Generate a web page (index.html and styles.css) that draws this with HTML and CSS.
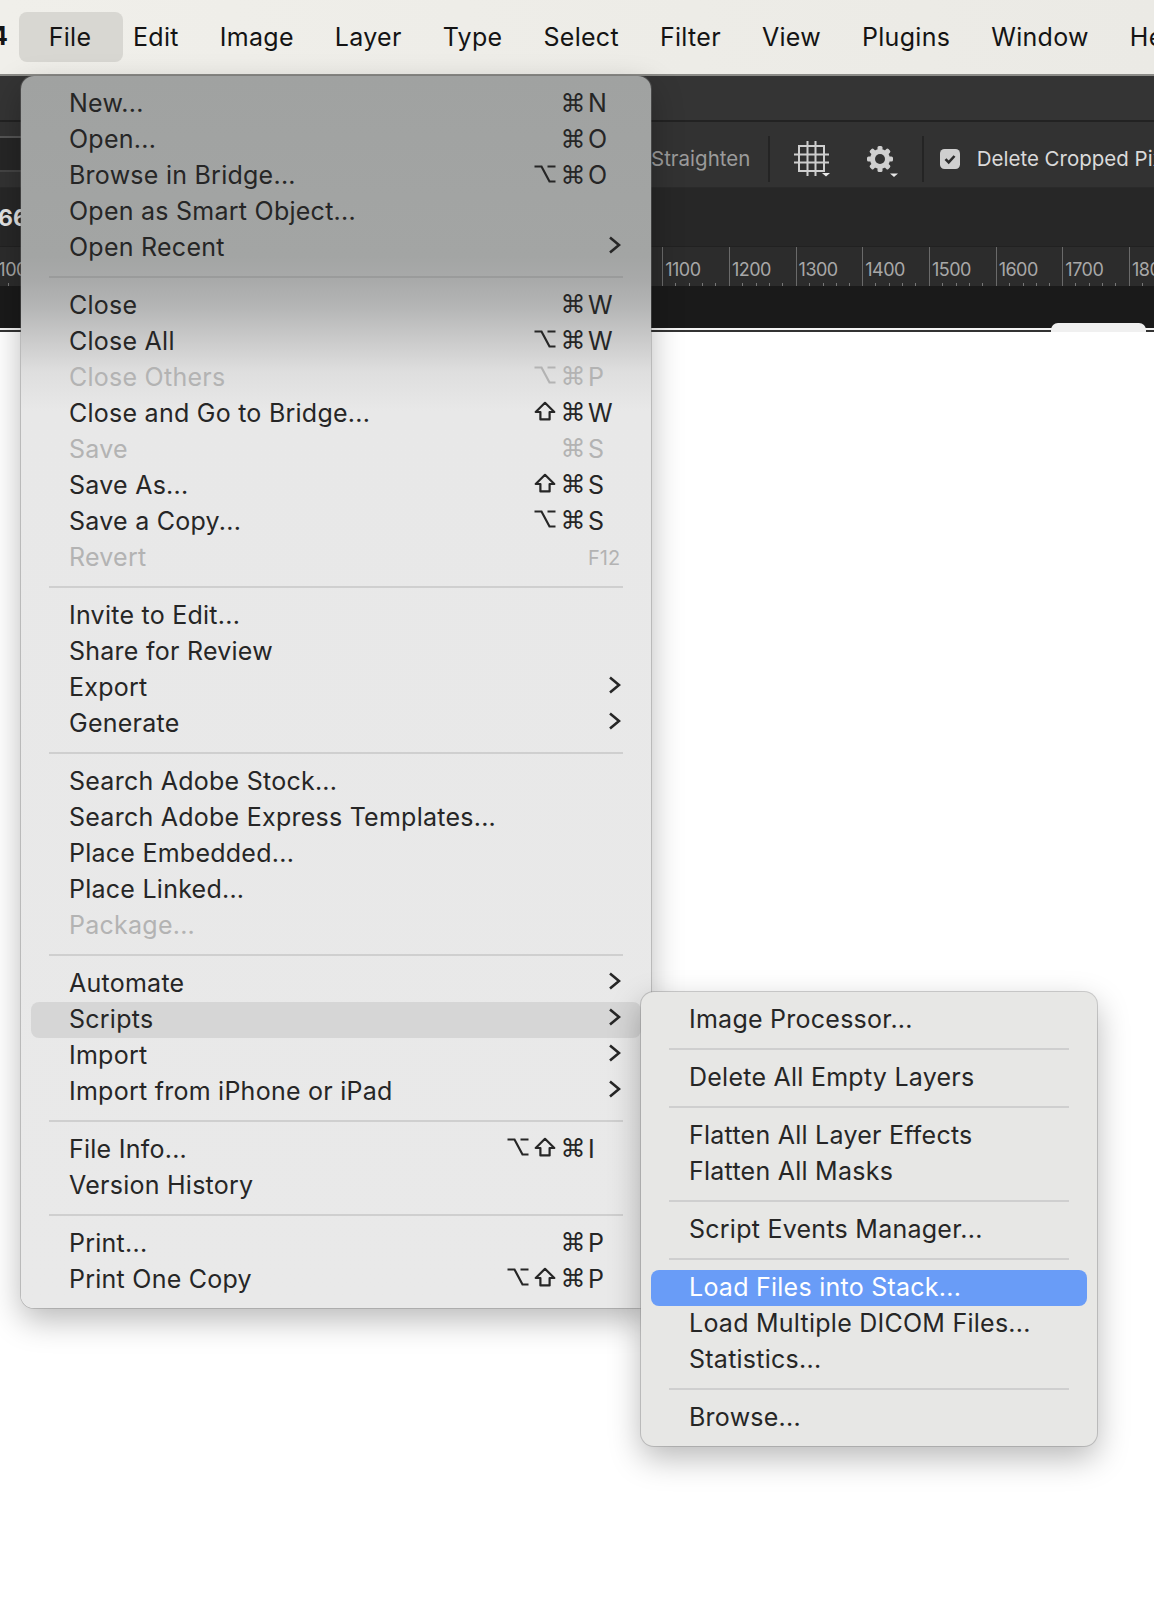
FILE: index.html
```html
<!DOCTYPE html>
<html lang="en">
<head>
<meta charset="utf-8">
<title>Photoshop File menu</title>
<link rel="stylesheet" href="styles.css">
</head>
<body>
<svg class="defs" width="0" height="0" aria-hidden="true">
  <symbol id="opt" viewBox="0 0 22 20"><path d="M0.5 2.5H7.5L15.5 17.5H21.5M13.5 2.5H21.5" fill="none" stroke="currentColor" stroke-width="2.2"/></symbol>
  <symbol id="shift" viewBox="0 0 22 20"><path d="M11 1.8L20.3 11H15.6V18.4H6.4V11H1.7Z" fill="none" stroke="currentColor" stroke-width="2.2" stroke-linejoin="round"/></symbol>
  <symbol id="chev" viewBox="0 0 13 18"><path d="M2 1.5L11 9L2 16.5" fill="none" stroke="#262626" stroke-width="2.6"/></symbol>
</svg>
<header class="menubar">
  <span class="apple-cut">4</span>
  <span class="mi active">File</span>
  <nav class="mi-list">
    <span>Edit</span><span>Image</span><span>Layer</span><span>Type</span><span>Select</span><span>Filter</span><span>View</span><span>Plugins</span><span>Window</span><span>Help</span>
  </nav>
</header>

<section class="app">
  <div class="band-top"></div>
  <div class="options">
    <div class="optbox"></div>
    <span class="straighten">Straighten</span>
    <i class="vdiv first"></i>
    <svg class="ic-grid" viewBox="0 0 38 38" width="38" height="38" aria-hidden="true">
      <g fill="none" stroke="#cfcfcf" stroke-width="2">
        <rect x="6" y="6" width="25" height="25"/>
        <path d="M14.5 1v35M22.5 1v35M1 14.5h35M1 22.5h35"/>
      </g>
      <path d="M29 33h8l-4 3.5z" fill="#e8e8e8"/>
    </svg>
    <svg class="ic-gear" viewBox="0 0 36 36" width="36" height="36" aria-hidden="true">
      <g fill="#cfcfcf" transform="translate(0 3)">
        <circle cx="15" cy="15" r="10"/>
        <rect x="12.5" y="2" width="5" height="26" rx="1.5"/>
        <rect x="12.5" y="2" width="5" height="26" rx="1.5" transform="rotate(45 15 15)"/>
        <rect x="12.5" y="2" width="5" height="26" rx="1.5" transform="rotate(90 15 15)"/>
        <rect x="12.5" y="2" width="5" height="26" rx="1.5" transform="rotate(135 15 15)"/>
        <circle cx="15" cy="15" r="5" fill="#323232"/>
      </g>
      <path d="M25 32.5h8l-4 3.5z" fill="#e8e8e8"/>
    </svg>
    <i class="vdiv second"></i>
    <svg class="ic-check" viewBox="0 0 20 20" width="20" height="20" aria-hidden="true">
      <rect width="20" height="20" rx="4.5" fill="#cfcfcf"/>
      <path d="M5.5 10.2l3.2 3.2 5.8-6.4" fill="none" stroke="#2b2b2b" stroke-width="2.6"/>
    </svg>
    <span class="delete">Delete Cropped Pixels</span>
  </div>
  <div class="docbar"><span class="zoomval">66</span></div>
  <div class="ruler">
    <span>100</span><span></span><span></span><span></span><span></span><span></span><span></span><span></span><span></span><span></span><span>1100</span><span>1200</span><span>1300</span><span>1400</span><span>1500</span><span>1600</span><span>1700</span><span>1800</span>
  </div>
  <div class="canvas-top"></div>
  <div class="edge"><b class="tab"></b></div>
</section>

<section class="menu main">
  <div class="row"><span class="lb">New...</span><span class="mods"><u>⌘</u></span><span class="key">N</span></div>
  <div class="row"><span class="lb">Open...</span><span class="mods"><u>⌘</u></span><span class="key">O</span></div>
  <div class="row"><span class="lb">Browse in Bridge...</span><span class="mods"><u><svg class="sym"><use href="#opt"/></svg></u><u>⌘</u></span><span class="key">O</span></div>
  <div class="row"><span class="lb">Open as Smart Object...</span></div>
  <div class="row"><span class="lb">Open Recent</span><span class="key"><svg class="chev"><use href="#chev"/></svg></span></div>
  <div class="sep dim"></div>
  <div class="row"><span class="lb">Close</span><span class="mods"><u>⌘</u></span><span class="key">W</span></div>
  <div class="row"><span class="lb">Close All</span><span class="mods"><u><svg class="sym"><use href="#opt"/></svg></u><u>⌘</u></span><span class="key">W</span></div>
  <div class="row off"><span class="lb">Close Others</span><span class="mods"><u><svg class="sym"><use href="#opt"/></svg></u><u>⌘</u></span><span class="key">P</span></div>
  <div class="row"><span class="lb">Close and Go to Bridge...</span><span class="mods"><u><svg class="sym"><use href="#shift"/></svg></u><u>⌘</u></span><span class="key">W</span></div>
  <div class="row off"><span class="lb">Save</span><span class="mods"><u>⌘</u></span><span class="key">S</span></div>
  <div class="row"><span class="lb">Save As...</span><span class="mods"><u><svg class="sym"><use href="#shift"/></svg></u><u>⌘</u></span><span class="key">S</span></div>
  <div class="row"><span class="lb">Save a Copy...</span><span class="mods"><u><svg class="sym"><use href="#opt"/></svg></u><u>⌘</u></span><span class="key">S</span></div>
  <div class="row off"><span class="lb">Revert</span><span class="key small">F12</span></div>
  <div class="sep"></div>
  <div class="row"><span class="lb">Invite to Edit...</span></div>
  <div class="row"><span class="lb">Share for Review</span></div>
  <div class="row"><span class="lb">Export</span><span class="key"><svg class="chev"><use href="#chev"/></svg></span></div>
  <div class="row"><span class="lb">Generate</span><span class="key"><svg class="chev"><use href="#chev"/></svg></span></div>
  <div class="sep"></div>
  <div class="row"><span class="lb">Search Adobe Stock...</span></div>
  <div class="row"><span class="lb">Search Adobe Express Templates...</span></div>
  <div class="row"><span class="lb">Place Embedded...</span></div>
  <div class="row"><span class="lb">Place Linked...</span></div>
  <div class="row off"><span class="lb">Package...</span></div>
  <div class="sep"></div>
  <div class="row"><span class="lb">Automate</span><span class="key"><svg class="chev"><use href="#chev"/></svg></span></div>
  <div class="row hover"><span class="lb">Scripts</span><span class="key"><svg class="chev"><use href="#chev"/></svg></span></div>
  <div class="row"><span class="lb">Import</span><span class="key"><svg class="chev"><use href="#chev"/></svg></span></div>
  <div class="row"><span class="lb">Import from iPhone or iPad</span><span class="key"><svg class="chev"><use href="#chev"/></svg></span></div>
  <div class="sep"></div>
  <div class="row"><span class="lb">File Info...</span><span class="mods"><u><svg class="sym"><use href="#opt"/></svg></u><u><svg class="sym"><use href="#shift"/></svg></u><u>⌘</u></span><span class="key">I</span></div>
  <div class="row"><span class="lb">Version History</span></div>
  <div class="sep"></div>
  <div class="row"><span class="lb">Print...</span><span class="mods"><u>⌘</u></span><span class="key">P</span></div>
  <div class="row"><span class="lb">Print One Copy</span><span class="mods"><u><svg class="sym"><use href="#opt"/></svg></u><u><svg class="sym"><use href="#shift"/></svg></u><u>⌘</u></span><span class="key">P</span></div>
</section>

<section class="menu sub">
  <div class="row"><span class="lb">Image Processor...</span></div>
  <div class="sep"></div>
  <div class="row"><span class="lb">Delete All Empty Layers</span></div>
  <div class="sep"></div>
  <div class="row"><span class="lb">Flatten All Layer Effects</span></div>
  <div class="row"><span class="lb">Flatten All Masks</span></div>
  <div class="sep"></div>
  <div class="row"><span class="lb">Script Events Manager...</span></div>
  <div class="sep"></div>
  <div class="row sel"><span class="lb">Load Files into Stack...</span></div>
  <div class="row"><span class="lb">Load Multiple DICOM Files...</span></div>
  <div class="row"><span class="lb">Statistics...</span></div>
  <div class="sep"></div>
  <div class="row"><span class="lb">Browse...</span></div>
</section>
</body>
</html>
```

FILE: styles.css
```css
* { box-sizing: border-box; }
html, body { margin: 0; padding: 0; }
body {
  position: relative;
  width: 1154px;
  height: 1609px;
  overflow: hidden;
  background: #fff;
  font-family: Inter, "Noto Sans", sans-serif;
  color: #262626;
}
.defs { position: absolute; }

/* menu bar */
.menubar {
  display: flex;
  align-items: center;
  height: 76px;
  border-bottom: 2px solid #8b8b87;
  background: linear-gradient(90deg, #f0efea, #ebeae5);
  font-size: 25px;
  letter-spacing: .3px;
  color: #141414;
  white-space: nowrap;
  overflow: hidden;
}
.apple-cut { width: 28px; margin-left: -9px; flex: none; font-weight: 700; margin-top: -2px; }
.mi { display: flex; align-items: center; justify-content: center; flex: none; }
.mi.active { width: 104px; height: 50px; margin-top: -1px; padding-right: 2px; border-radius: 8px; background: #d8d7d2; }
.mi-list { display: flex; gap: 41px; margin-left: 10px; }

/* dark application chrome */
.app { display: flex; flex-direction: column; height: 256px; overflow: hidden; background: #333; }
.band-top { flex: none; height: 46px; background: #343434; border-bottom: 2px solid #222; }
.options {
  display: flex;
  align-items: center;
  flex: none;
  height: 66px;
  padding-top: 8px;
  background: #323232;
  white-space: nowrap;
  border-bottom: 1px solid #2a2a2a;
}
.optbox {
  flex: none;
  align-self: flex-start;
  width: 21px;
  height: 36px;
  margin-top: 6px;
  background: #262626;
  border-top: 2px solid #555;
  border-bottom: 2px solid #444;
}
.straighten { margin-left: 630px; font-size: 20.5px; color: #9b9b9b; flex: none; }
.vdiv { flex: none; width: 2px; height: 46px; background: #242424; }
.vdiv.first { margin-left: 18px; }
.ic-grid { flex: none; margin-left: 23px; }
.ic-gear { flex: none; margin-left: 34px; }
.vdiv.second { margin-left: 20.4px; }
.ic-check { flex: none; margin-left: 16px; }
.delete { margin-left: 17px; font-size: 20.5px; color: #dadada; flex: none; }

.docbar {
  flex: none;
  height: 59px;
  display: flex;
  align-items: center;
  background: #272727;
  border-bottom: 1px solid #212121;
}
.zoomval { margin-left: -2px; padding-top: 2px; font-size: 23px; font-weight: 700; color: #e4e4e4; }

.ruler {
  display: flex;
  flex: none;
  height: 39px;
  margin-left: -4.7px;
  background-color: #2c2c2c;
}
.ruler span {
  flex: 0 0 66.7px;
  padding: 11px 0 0 2px;
  font-size: 18px;
  line-height: 24px;
  letter-spacing: -0.5px;
  color: #a8a8a8;
  border-left: 1px solid #6a6a6a;
  background-image:
    linear-gradient(#777, #777), linear-gradient(#777, #777),
    linear-gradient(#777, #777), linear-gradient(#777, #777);
  background-size: 1px 3px;
  background-repeat: no-repeat;
  background-position: 12px 100%, 26px 100%, 39px 100%, 52px 100%;
}
.canvas-top { flex: none; height: 42px; background: #1a1a1a; }
.edge { position: relative; flex: none; height: 4px; background: #333; border-top: 2px solid #f4f4f4; }
.tab {
  position: absolute;
  left: 1051px;
  top: -7px;
  width: 95px;
  height: 9px;
  border-radius: 7px 7px 0 0;
  background: #f0f0f0;
}

/* menus */
.menu {
  position: absolute;
  padding: 9.7px 10px 9px;
  font-size: 25px;
  letter-spacing: .25px;
  white-space: nowrap;
  box-shadow: 0 0 0 1px rgba(120,120,120,.35), 0 12px 32px rgba(0,0,0,.28);
}
.main {
  left: 21px;
  top: 76px;
  width: 630px;
  height: 1232px;
  border-radius: 13px;
  background: linear-gradient(180deg,
    #a0a2a1 0, #a3a5a4 180px, #a9aaaa 205px, #b4b5b5 230px,
    #cbcbcb 265px, #dedede 295px, #e8e8e8 335px, #e9e9e9 100%);
}
.sub {
  left: 641px;
  top: 992px;
  width: 456px;
  height: 454px;
  border-radius: 13px;
  background: #e7e7e5;
}
.row { display: flex; align-items: center; height: 36px; padding: 0 0 1.4px 38px; border-radius: 8px; }
.lb { flex: 1 1 auto; }
.mods { display: flex; flex: none; margin-right: 1.5px; }
.mods u {
  display: flex;
  align-items: center;
  justify-content: center;
  width: 27px;
  height: 36px;
  text-decoration: none;
  font-family: "DejaVu Sans", sans-serif;
  font-size: 25px;
}
.sym { width: 22px; height: 20px; margin: -3px 3px 0 0; }
.key { flex: 0 0 53px; display: flex; align-items: center; }
.key.small { font-size: 20px; letter-spacing: 0; padding-top: 3px; }
.chev { width: 13px; height: 18px; margin-left: 20px; margin-top: -4px; }
.off { color: #b3b3b3; }
.hover { background: #d6d6d6; }
.sel { background: #699cf7; color: #fff; }
.sep { height: 2px; margin: 9.9px 18.5px 10.1px 17.5px; background: #cfcfcf; }
.sep.dim { background: #9a9b9b; }
```
